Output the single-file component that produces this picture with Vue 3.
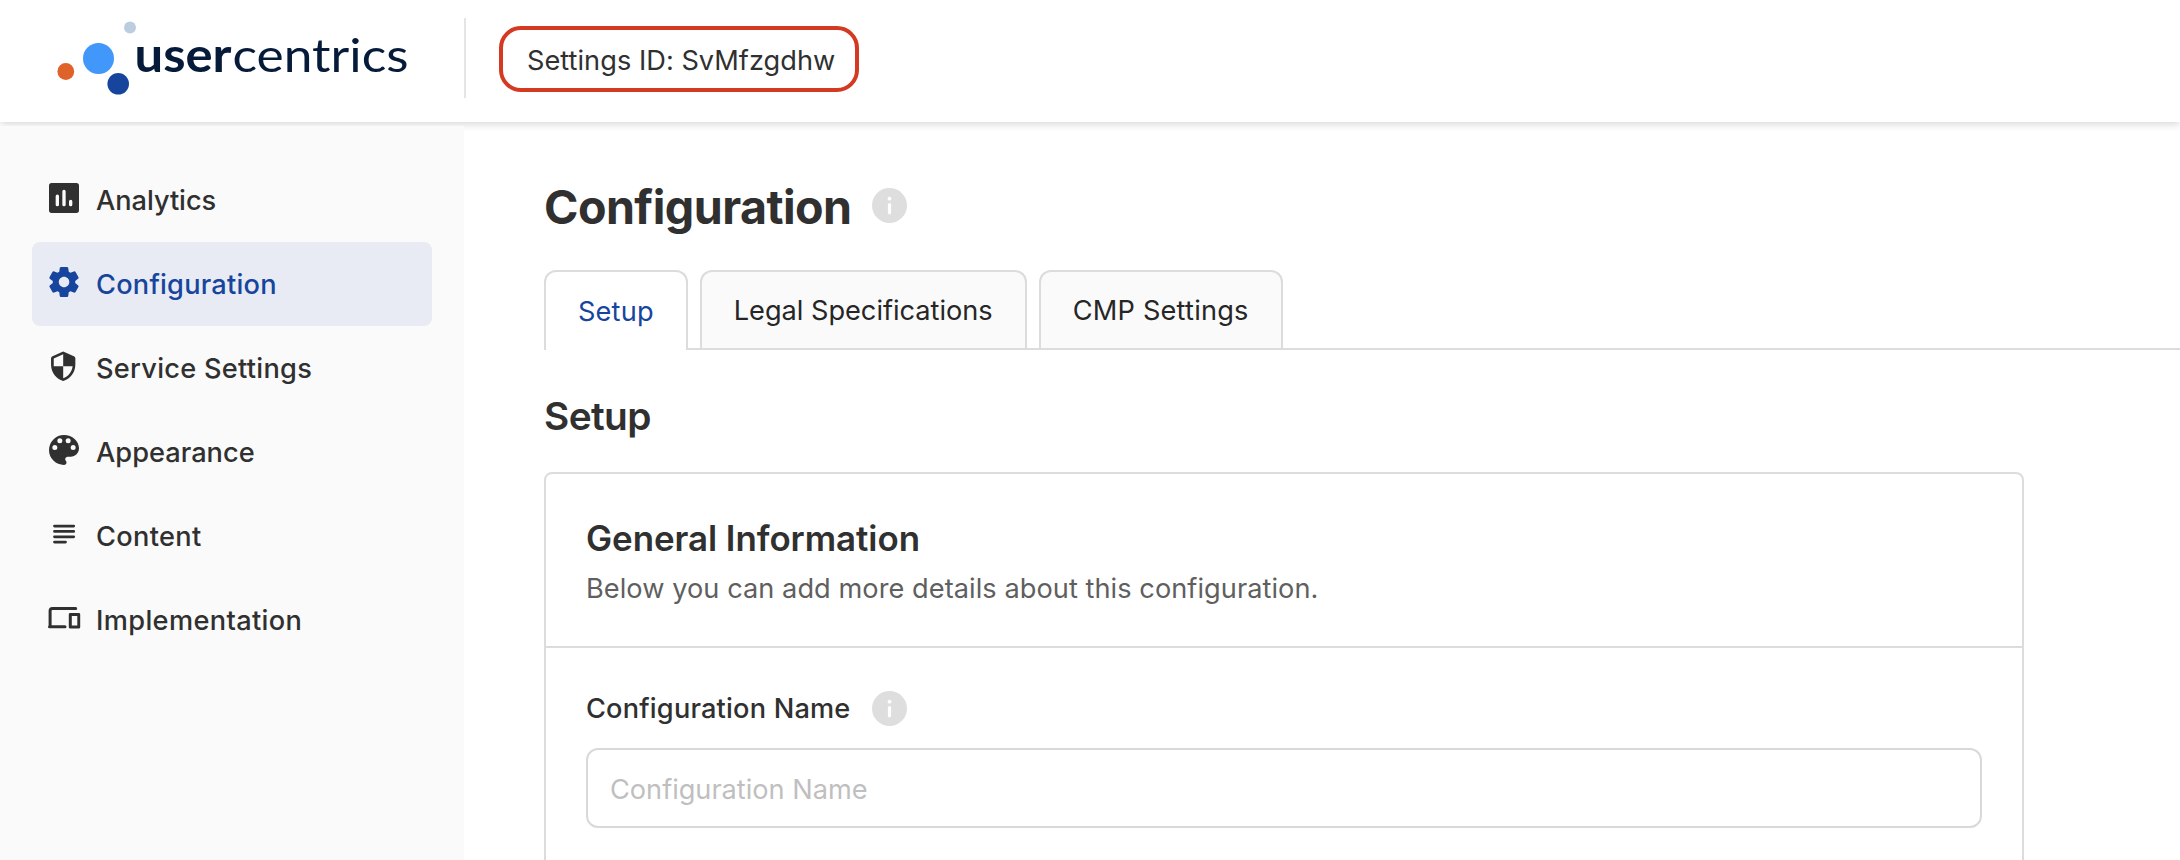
<script setup>
import { ref } from 'vue'

const settingsId = 'SvMfzgdhw'
const navItems = [
  { name: 'Analytics', tracking: -0.05 },
  { name: 'Configuration', tracking: 0.22 },
  { name: 'Service Settings', tracking: 0.27 },
  { name: 'Appearance', tracking: 0.03 },
  { name: 'Content', tracking: 0.33 },
  { name: 'Implementation', tracking: 0.35 },
]
const activeNav = ref('Configuration')
const tabs = [
  { name: 'Setup', tracking: 0.16 },
  { name: 'Legal Specifications', tracking: -0.02 },
  { name: 'CMP Settings', tracking: 0.2 },
]
const activeTab = ref('Setup')
const configName = ref('')
</script>

<template>
  <div class="app">
    <header class="topbar">
      <div class="brand">
        <svg class="logo" width="464" height="122" viewBox="0 0 464 122" role="img" aria-label="usercentrics">
          <circle cx="130" cy="27.5" r="6" fill="#bccde0" />
          <circle cx="98.5" cy="58.5" r="15.5" fill="#4197fa" />
          <circle cx="65.8" cy="71.5" r="8.4" fill="#df622a" />
          <circle cx="118.2" cy="83.8" r="10.8" fill="#17459d" />
          <text class="logo-bold" x="134.5" y="71.6" textLength="97" lengthAdjust="spacingAndGlyphs">user</text>
          <text class="logo-light" x="232.5" y="71.6" textLength="176" lengthAdjust="spacingAndGlyphs">centrics</text>
        </svg>
      </div>
      <div class="divider"></div>
      <div class="settings-id">Settings ID: {{ settingsId }}</div>
    </header>

    <div class="body">
      <nav class="sidebar">
        <a
          v-for="item in navItems"
          :key="item.name"
          class="nav-item"
          :class="{ active: item.name === activeNav }"
          @click="activeNav = item.name"
        >
          <svg v-if="item.name === 'Analytics'" class="icon" viewBox="0 0 24 24">
            <path
              fill-rule="evenodd"
              d="M4.600 3h14.800A1.600 1.600 0 0 1 21 4.600v14.800a1.600 1.600 0 0 1-1.600 1.600H4.600A1.600 1.600 0 0 1 3 19.400V4.600A1.600 1.600 0 0 1 4.600 3ZM8 9.900a1 1 0 0 0-1 1V16a1 1 0 0 0 2 0v-5.100a1 1 0 0 0-1-1ZM12 7a1 1 0 0 0-1 1v8a1 1 0 0 0 2 0V8a1 1 0 0 0-1-1ZM16 13a1 1 0 0 0-1 1v2a1 1 0 0 0 2 0v-2a1 1 0 0 0-1-1Z"
            />
          </svg>
          <svg v-else-if="item.name === 'Configuration'" class="icon gear" viewBox="0 0 24 24">
            <path
              d="M19.500 12c0-.230-.010-.450-.030-.680l1.860-1.410c.400-.300.510-.860.260-1.300l-1.870-3.230a.987.987 0 0 0-1.250-.420l-2.150.910c-.370-.260-.760-.490-1.170-.680l-.290-2.310c-.060-.500-.490-.880-.990-.880h-3.730c-.510 0-.940.380-1 .880l-.290 2.310c-.410.190-.800.420-1.170.680l-2.150-.910c-.460-.200-1-.020-1.250.420L2.410 8.620c-.250.440-.140.990.260 1.300l1.860 1.410a7.343 7.343 0 0 0 0 1.350l-1.860 1.410c-.400.300-.510.860-.260 1.300l1.870 3.230c.250.440.790.620 1.250.420l2.150-.910c.370.260.760.490 1.170.680l.290 2.310c.060.500.490.880.990.880h3.730c.500 0 .930-.380.990-.880l.290-2.310c.410-.190.800-.420 1.170-.680l2.150.910c.460.200 1 .020 1.250-.420l1.870-3.230c.250-.440.140-.990-.260-1.300l-1.860-1.410c.030-.230.040-.450.040-.680zm-7.460 3.500c-1.930 0-3.500-1.570-3.500-3.500s1.570-3.500 3.500-3.500 3.500 1.570 3.500 3.500-1.570 3.500-3.500 3.500z"
            />
          </svg>
          <svg v-else-if="item.name === 'Service Settings'" class="icon shield" viewBox="0 0 24 24">
            <path
              fill-rule="evenodd"
              d="M12 1.100 4.100 4.600A1.800 1.800 0 0 0 3 6.200V11c0 5.550 3.840 10.740 9 12 5.160-1.260 9-6.450 9-12V6.200a1.800 1.800 0 0 0-1.100-1.600ZM12 3.200V12h7c-.530 4.120-3.280 7.790-7 8.940V12H5V6.300Z"
            />
          </svg>
          <svg v-else-if="item.name === 'Appearance'" class="icon" viewBox="0 0 24 24">
            <path
              d="M12 3a9 9 0 0 0 0 18c.830 0 1.500-.670 1.500-1.500 0-.390-.150-.740-.390-1.010-.230-.260-.380-.610-.380-.990 0-.830.670-1.500 1.500-1.500H16c2.760 0 5-2.240 5-5 0-4.420-4.030-8-9-8zm-5.500 9a1.500 1.500 0 1 1 0-3 1.500 1.500 0 0 1 0 3zm3-4a1.500 1.500 0 1 1 0-3 1.500 1.500 0 0 1 0 3zm5 0a1.500 1.500 0 1 1 0-3 1.500 1.500 0 0 1 0 3zm3 4a1.500 1.500 0 1 1 0-3 1.500 1.500 0 0 1 0 3z"
            />
          </svg>
          <svg v-else-if="item.name === 'Content'" class="icon" viewBox="0 0 40 40">
            <path class="stroke content-lines" d="M10.500 12.100h19.200M10.500 17.400h19.200M10.500 22.800h19.200M10.500 28.100h11" />
          </svg>
          <svg v-else class="icon" viewBox="0 0 40 40">
            <path
              class="stroke devices"
              d="M31.700 10.500H8.400a2.300 2.300 0 0 0-2.300 2.300V28M5.500 28.800h15.500"
            />
            <path
              fill-rule="evenodd"
              d="M26.200 14.900h8.600a1.400 1.400 0 0 1 1.400 1.400v12.900a1.400 1.400 0 0 1-1.400 1.400h-8.600a1.400 1.400 0 0 1-1.400-1.400V16.300a1.400 1.400 0 0 1 1.400-1.400ZM27.800 18v9.400h5.500V18Z"
            />
          </svg>
          <span :style="{ letterSpacing: item.tracking + 'px' }">{{ item.name }}</span>
        </a>
      </nav>

      <main class="content">
        <div class="title-row">
          <h1>Configuration</h1>
          <svg class="info" viewBox="0 0 35 35">
            <circle cx="17.5" cy="17.5" r="17.5" />
            <path class="info-mark" d="M17.500 16.600v8.200" />
            <circle class="info-dot" cx="17.5" cy="10.7" r="1.9" />
          </svg>
        </div>

        <div class="tabs">
          <button
            v-for="tab in tabs"
            :key="tab.name"
            class="tab"
            :class="{ selected: tab.name === activeTab }"
            :style="{ letterSpacing: tab.tracking + 'px' }"
            @click="activeTab = tab.name"
          >{{ tab.name }}</button>
          <div class="tabs-rest"></div>
        </div>

        <h2>Setup</h2>

        <section class="card">
          <div class="card-head">
            <h3>General Information</h3>
            <p>Below you can add more details about this configuration.</p>
          </div>
          <div class="card-body">
            <div class="label-row">
              <label for="config-name">Configuration Name</label>
              <svg class="info" viewBox="0 0 35 35">
                <circle cx="17.5" cy="17.5" r="17.5" />
                <path class="info-mark" d="M17.500 16.600v8.200" />
                <circle class="info-dot" cx="17.5" cy="10.7" r="1.9" />
              </svg>
            </div>
            <input id="config-name" v-model="configName" type="text" placeholder="Configuration Name" />
          </div>
        </section>
      </main>
    </div>
  </div>
</template>

<style scoped>
.app {
  width: 100%;
  height: 860px;
  overflow: hidden;
  background: #fff;
  color: #303030;
  font-family: Inter, "Liberation Sans", sans-serif;
  font-size: 27.2px;
  line-height: 40px;
  font-variant-ligatures: none;
}
.app * {
  box-sizing: border-box;
}
.topbar {
  position: relative;
  z-index: 1;
  display: flex;
  height: 122px;
  background: #fff;
  box-shadow: 0 2px 8px rgba(0, 0, 0, 0.17);
}
.brand {
  width: 464px;
  flex: none;
}
.logo {
  display: block;
}
.logo text {
  font-family: Lato, sans-serif;
  font-size: 47px;
  fill: #061a39;
}
.logo .logo-bold {
  font-weight: 700;
}
.logo .logo-light {
  font-weight: 400;
}
.divider {
  width: 2px;
  height: 80px;
  margin-top: 18px;
  background: #e5e5e5;
}
.settings-id {
  width: 360px;
  height: 66px;
  margin: 26px 0 0 33px;
  padding-left: 24px;
  border: 4px solid #d43a22;
  border-radius: 22px;
  line-height: 62px;
  letter-spacing: 0.02px;
  white-space: nowrap;
}
.body {
  display: flex;
  height: 738px;
}
.sidebar {
  position: relative;
  z-index: 2;
  flex: none;
  width: 464px;
  margin-top: 4px;
  padding: 32px 32px 0;
  background: #fafafa;
}
.nav-item {
  display: flex;
  align-items: center;
  width: 400px;
  height: 84px;
  padding-left: 12px;
  border-radius: 8px;
  font-weight: 500;
  cursor: pointer;
}
.nav-item span {
  padding-top: 2px;
}
.nav-item.active {
  background: #e8ebf3;
  color: #17459d;
}
.icon {
  width: 40px;
  height: 40px;
  margin: 0 12px 4px 0;
  fill: currentColor;
}
.icon.gear {
  width: 36px;
  height: 36px;
  margin: 0 14px 4px 2px;
}
.icon.shield {
  width: 32.4px;
  height: 32.4px;
  margin: 0 16.6px 4px 3px;
}
.stroke {
  fill: none;
  stroke: currentColor;
  stroke-linecap: round;
}
.content-lines {
  stroke-width: 2.8;
}
.devices {
  stroke-width: 3;
}
.content {
  flex: 1;
  min-width: 0;
  padding-left: 80px;
}
.title-row {
  display: flex;
  align-items: center;
  height: 56px;
  margin-top: 57px;
}
h1 {
  width: 328px;
  margin: 0;
  font-size: 46.6px;
  font-weight: 700;
  line-height: 56px;
  letter-spacing: -0.56px;
}
.info {
  display: block;
  width: 35px;
  height: 35px;
  fill: #dedede;
}
.title-row .info {
  margin-bottom: 3px;
}
.info-mark {
  fill: none;
  stroke: #fff;
  stroke-width: 3.2;
  stroke-linecap: round;
}
.info-dot {
  fill: #fff;
}
.tabs {
  display: flex;
  height: 80px;
  margin-top: 35px;
}
.tab {
  flex: none;
  height: 80px;
  margin: 0;
  padding: 0 32px;
  border: 2px solid #dcdcdc;
  border-bottom: 0;
  border-radius: 12px 12px 0 0;
  background: #fafafa;
  box-shadow: inset 0 -2px #dcdcdc;
  color: #262626;
  font: inherit;
  line-height: 76px;
}
.tab.selected {
  padding-top: 2px;
  background: #fff;
  box-shadow: none;
  color: #17459d;
}
.tab + .tab {
  position: relative;
  margin-left: 12px;
}
.tab + .tab::before {
  content: "";
  position: absolute;
  left: -14px;
  bottom: 0;
  width: 12px;
  height: 2px;
  background: #dcdcdc;
}
.tabs-rest {
  flex: 1;
  border-bottom: 2px solid #dcdcdc;
}
h2 {
  margin: 42px 0 0;
  font-size: 38.8px;
  font-weight: 600;
  line-height: 48px;
  letter-spacing: -0.6px;
}
.card {
  width: 1480px;
  height: 420px;
  margin-top: 32px;
  border: 2px solid #dcdcdc;
  border-radius: 8px;
}
.card-head {
  height: 174px;
  padding: 42px 40px 0;
  border-bottom: 2px solid #dcdcdc;
}
h3 {
  margin: 0;
  font-size: 34.9px;
  font-weight: 600;
  line-height: 44px;
  letter-spacing: -0.05px;
}
.card-head p {
  margin: 9px 0 0;
  color: #5f5f5f;
  letter-spacing: 0.045px;
}
.card-body {
  padding: 40px 40px 0;
}
.label-row {
  display: flex;
  align-items: center;
  height: 40px;
}
.label-row label {
  width: 286px;
  padding-top: 2px;
  font-weight: 500;
  letter-spacing: 0.18px;
}
input {
  display: block;
  width: 1396px;
  height: 80px;
  margin: 20px 0 0;
  padding: 2px 22px 0;
  border: 2px solid #d9d9d9;
  border-radius: 12px;
  outline: none;
  background: #fff;
  color: #303030;
  font: inherit;
  letter-spacing: -0.03px;
}
input::placeholder {
  color: #bfbfbf;
  opacity: 1;
}
</style>

<style>
body {
  overflow: hidden;
  background: #fff;
}
</style>
